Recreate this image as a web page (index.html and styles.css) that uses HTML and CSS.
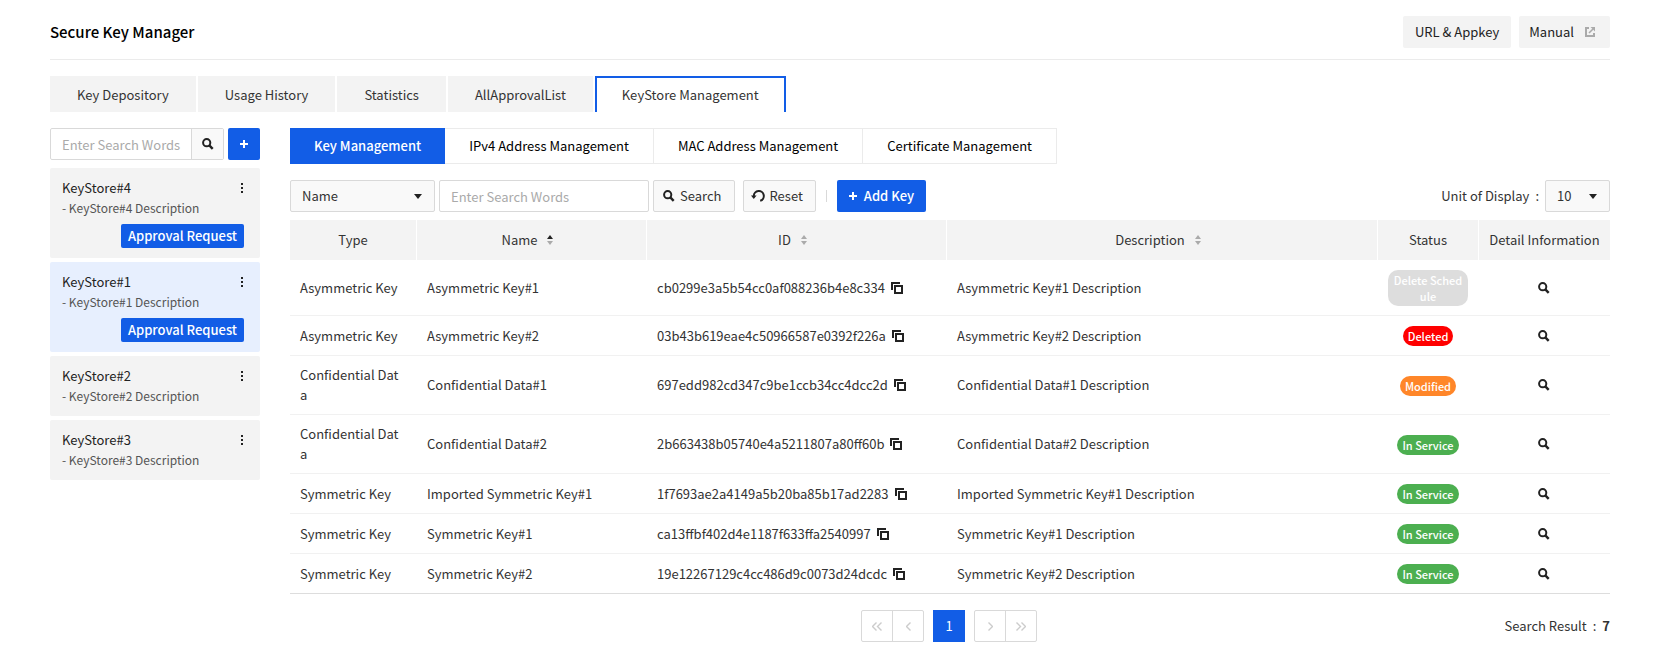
FILE: index.html
```html
<!DOCTYPE html>
<html lang="en">
<head>
<meta charset="utf-8">
<title>Secure Key Manager</title>
<link rel="stylesheet" href="styles.css">
</head>
<body>
<svg class="sprite" aria-hidden="true">
  <symbol id="i-search" viewBox="0 0 12 12"><circle cx="4.7" cy="4.7" r="3.6" fill="none" stroke="currentColor" stroke-width="2"/><path d="M7.3 7.3 10.7 10.8" stroke="currentColor" stroke-width="2.4"/></symbol>
  <symbol id="i-plus" viewBox="0 0 8 8"><path d="M4 0v8M0 4h8" stroke="currentColor" stroke-width="2"/></symbol>
  <symbol id="i-more" viewBox="0 0 2 10"><path d="M0 0h2v2H0zM0 4h2v2H0zM0 8h2v2H0z" fill="currentColor"/></symbol>
  <symbol id="i-copy" viewBox="0 0 12 12"><path d="M1 8V1h8" fill="none" stroke="currentColor" stroke-width="2"/><path d="M4 4h7v7H4z" fill="none" stroke="currentColor" stroke-width="2"/></symbol>
  <symbol id="i-reset" viewBox="0 0 14 12"><path d="M2.8 7.2V6a5 5 0 1 1 6.4 4.8" fill="none" stroke="currentColor" stroke-width="2"/><path d="M0 5.6h5.6L2.8 9z" fill="currentColor"/></symbol>
  <symbol id="i-caret" viewBox="0 0 8 5"><path d="M0 0h8L4 5z" fill="currentColor"/></symbol>
  <symbol id="i-external" viewBox="0 0 10 10"><path d="M4 1H1v8h8V6" fill="none" stroke="currentColor" stroke-width="2"/><path d="M5.5 0H10v4.5z" fill="currentColor"/><path d="M4 6 8 2" stroke="currentColor" stroke-width="1.6"/></symbol>
  <symbol id="i-left" viewBox="0 0 5 9"><path d="M4.5.5l-4 4 4 4" fill="none" stroke="currentColor" stroke-width="1.4"/></symbol>
  <symbol id="i-right" viewBox="0 0 5 9"><path d="M.5.5l4 4-4 4" fill="none" stroke="currentColor" stroke-width="1.4"/></symbol>
  <symbol id="i-first" viewBox="0 0 10 9"><path d="M4.5.5l-4 4 4 4M9.5.5l-4 4 4 4" fill="none" stroke="currentColor" stroke-width="1.4"/></symbol>
  <symbol id="i-last" viewBox="0 0 10 9"><path d="M.5.5l4 4-4 4M5.5.5l4 4-4 4" fill="none" stroke="currentColor" stroke-width="1.4"/></symbol>
</svg>

<header class="page-header">
  <h1>Secure Key Manager</h1>
  <div class="header-actions">
    <button class="soft-btn" type="button">URL &amp; Appkey</button>
    <a class="soft-btn manual" href="#">Manual <svg class="ic-external"><use href="#i-external"/></svg></a>
  </div>
</header>

<nav class="tabs">
  <button type="button">Key Depository</button>
  <button type="button">Usage History</button>
  <button type="button">Statistics</button>
  <button type="button">AllApprovalList</button>
  <button type="button" class="active">KeyStore Management</button>
</nav>

<div class="layout">
  <aside class="sidebar">
    <div class="side-search">
      <div class="search-group">
        <input type="text" placeholder="Enter Search Words" aria-label="Search key stores">
        <button type="button" aria-label="Search"><svg class="ic-search"><use href="#i-search"/></svg></button>
      </div>
      <button type="button" class="primary square" aria-label="Add key store"><svg class="ic-plus"><use href="#i-plus"/></svg></button>
    </div>
    <ul class="stores">
      <li>
        <div class="store-head"><span>KeyStore#4</span><button type="button" class="more" aria-label="More"><svg><use href="#i-more"/></svg></button></div>
        <p>- KeyStore#4 Description</p>
        <button type="button" class="primary approval">Approval Request</button>
      </li>
      <li class="selected">
        <div class="store-head"><span>KeyStore#1</span><button type="button" class="more" aria-label="More"><svg><use href="#i-more"/></svg></button></div>
        <p>- KeyStore#1 Description</p>
        <button type="button" class="primary approval">Approval Request</button>
      </li>
      <li>
        <div class="store-head"><span>KeyStore#2</span><button type="button" class="more" aria-label="More"><svg><use href="#i-more"/></svg></button></div>
        <p>- KeyStore#2 Description</p>
      </li>
      <li>
        <div class="store-head"><span>KeyStore#3</span><button type="button" class="more" aria-label="More"><svg><use href="#i-more"/></svg></button></div>
        <p>- KeyStore#3 Description</p>
      </li>
    </ul>
  </aside>

  <main class="content">
    <nav class="subtabs">
      <button type="button" class="active">Key Management</button>
      <button type="button">IPv4 Address Management</button>
      <button type="button">MAC Address Management</button>
      <button type="button">Certificate Management</button>
    </nav>

    <div class="toolbar">
      <div class="filter">
        <div class="select field"><select aria-label="Search field"><option>Name</option></select><svg><use href="#i-caret"/></svg></div>
        <input class="keyword" type="text" placeholder="Enter Search Words" aria-label="Search keys">
        <button type="button" class="line-btn"><svg class="ic-search"><use href="#i-search"/></svg>Search</button>
      </div>
      <button type="button" class="line-btn reset"><svg class="ic-reset"><use href="#i-reset"/></svg>Reset</button>
      <span class="divider"></span>
      <button type="button" class="primary add"><svg class="ic-plus"><use href="#i-plus"/></svg>Add Key</button>
      <div class="unit">
        <label for="unit">Unit of Display</label><span class="colon">:</span>
        <div class="select count"><select id="unit"><option>10</option></select><svg><use href="#i-caret"/></svg></div>
      </div>
    </div>

    <table class="keys">
      <colgroup><col class="c-type"><col class="c-name"><col class="c-id"><col><col class="c-status"><col class="c-detail"></colgroup>
      <thead>
        <tr>
          <th>Type</th>
          <th class="sortable">Name<svg class="sort asc" viewBox="0 0 6 10"><path d="M3 0l3 4H0z"/><path d="M3 10l3-4H0z"/></svg></th>
          <th class="sortable">ID<svg class="sort" viewBox="0 0 6 10"><path d="M3 0l3 4H0z"/><path d="M3 10l3-4H0z"/></svg></th>
          <th class="sortable">Description<svg class="sort" viewBox="0 0 6 10"><path d="M3 0l3 4H0z"/><path d="M3 10l3-4H0z"/></svg></th>
          <th>Status</th>
          <th>Detail Information</th>
        </tr>
      </thead>
      <tbody>
        <tr><td>Asymmetric Key</td><td>Asymmetric Key#1</td><td>cb0299e3a5b54cc0af088236b4e8c334<button type="button" class="copy" aria-label="Copy ID"><svg><use href="#i-copy"/></svg></button></td><td>Asymmetric Key#1 Description</td><td><span class="badge scheduled">Delete Schedule</span></td><td class="detail"><button type="button" aria-label="Details"><svg class="ic-search"><use href="#i-search"/></svg></button></td></tr>
        <tr><td>Asymmetric Key</td><td>Asymmetric Key#2</td><td>03b43b619eae4c50966587e0392f226a<button type="button" class="copy" aria-label="Copy ID"><svg><use href="#i-copy"/></svg></button></td><td>Asymmetric Key#2 Description</td><td><span class="badge deleted">Deleted</span></td><td class="detail"><button type="button" aria-label="Details"><svg class="ic-search"><use href="#i-search"/></svg></button></td></tr>
        <tr><td>Confidential Data</td><td>Confidential Data#1</td><td>697edd982cd347c9be1ccb34cc4dcc2d<button type="button" class="copy" aria-label="Copy ID"><svg><use href="#i-copy"/></svg></button></td><td>Confidential Data#1 Description</td><td><span class="badge modified">Modified</span></td><td class="detail"><button type="button" aria-label="Details"><svg class="ic-search"><use href="#i-search"/></svg></button></td></tr>
        <tr><td>Confidential Data</td><td>Confidential Data#2</td><td>2b663438b05740e4a5211807a80ff60b<button type="button" class="copy" aria-label="Copy ID"><svg><use href="#i-copy"/></svg></button></td><td>Confidential Data#2 Description</td><td><span class="badge service">In Service</span></td><td class="detail"><button type="button" aria-label="Details"><svg class="ic-search"><use href="#i-search"/></svg></button></td></tr>
        <tr><td>Symmetric Key</td><td>Imported Symmetric Key#1</td><td>1f7693ae2a4149a5b20ba85b17ad2283<button type="button" class="copy" aria-label="Copy ID"><svg><use href="#i-copy"/></svg></button></td><td>Imported Symmetric Key#1 Description</td><td><span class="badge service">In Service</span></td><td class="detail"><button type="button" aria-label="Details"><svg class="ic-search"><use href="#i-search"/></svg></button></td></tr>
        <tr><td>Symmetric Key</td><td>Symmetric Key#1</td><td>ca13ffbf402d4e1187f633ffa2540997<button type="button" class="copy" aria-label="Copy ID"><svg><use href="#i-copy"/></svg></button></td><td>Symmetric Key#1 Description</td><td><span class="badge service">In Service</span></td><td class="detail"><button type="button" aria-label="Details"><svg class="ic-search"><use href="#i-search"/></svg></button></td></tr>
        <tr><td>Symmetric Key</td><td>Symmetric Key#2</td><td>19e12267129c4cc486d9c0073d24dcdc<button type="button" class="copy" aria-label="Copy ID"><svg><use href="#i-copy"/></svg></button></td><td>Symmetric Key#2 Description</td><td><span class="badge service">In Service</span></td><td class="detail"><button type="button" aria-label="Details"><svg class="ic-search"><use href="#i-search"/></svg></button></td></tr>
      </tbody>
    </table>

    <footer class="table-footer">
      <nav class="pager" aria-label="Pages">
        <div class="pager-group">
          <button type="button" aria-label="First page"><svg class="double"><use href="#i-first"/></svg></button>
          <button type="button" aria-label="Previous page"><svg><use href="#i-left"/></svg></button>
        </div>
        <button type="button" class="primary square current">1</button>
        <div class="pager-group">
          <button type="button" aria-label="Next page"><svg><use href="#i-right"/></svg></button>
          <button type="button" aria-label="Last page"><svg class="double"><use href="#i-last"/></svg></button>
        </div>
      </nav>
      <p class="result">Search Result<span class="colon">:</span><strong>7</strong></p>
    </footer>
  </main>
</div>
</body>
</html>
```
FILE: styles.css
```css
* { box-sizing: border-box; }

body {
  margin: 0;
  padding: 16px 50px;
  background: #fff;
  color: #333;
  font: 13px/20px "Noto Sans CJK KR", "Noto Sans", sans-serif;
}

button, input, select {
  margin: 0;
  padding: 0;
  border: 0;
  border-radius: 0;
  background: none;
  color: inherit;
  font: inherit;
}

button { cursor: pointer; }
svg { display: block; flex: none; }
p, h1, ul { margin: 0; padding: 0; }
ul { list-style: none; }

.sprite { display: none; }
.ic-search { width: 12px; height: 12px; color: #222; }
.ic-plus { width: 8px; height: 8px; }
.ic-reset { width: 14px; height: 12px; color: #222; }
.ic-external { width: 10px; height: 10px; color: #aaa; }

.page-header {
  display: flex;
  justify-content: space-between;
  align-items: center;
  padding-bottom: 11px;
  border-bottom: 1px solid #ebebeb;
}
.page-header h1 { font-size: 15px; font-weight: 500; color: #000; }
.header-actions { display: flex; gap: 8px; }
.soft-btn {
  display: flex;
  align-items: center;
  height: 32px;
  padding: 0 12px;
  border-radius: 2px;
  background: #f3f3f3;
  color: #222;
  text-decoration: none;
}
.manual { gap: 11px; padding: 0 15px 0 10px; }

.tabs { display: flex; gap: 2px; margin-top: 16px; }
.tabs button { height: 36px; padding: 2px 27px 0; background: #f3f3f3; }
.tabs .active {
  padding: 0 25px;
  border: 2px solid #125de6;
  border-bottom: 0;
  background: #fff;
}

.layout {
  display: grid;
  grid-template-columns: 210px minmax(0, 1fr);
  gap: 30px;
  margin-top: 16px;
}

.primary {
  border-radius: 2px;
  background: #125de6;
  color: #fff;
  font-weight: 500;
}
.square { display: grid; place-items: center; width: 32px; height: 32px; }

.side-search { display: flex; gap: 4px; }
.search-group {
  display: flex;
  flex: 1;
  min-width: 0;
  height: 32px;
  border: 1px solid #d9d9d9;
  border-radius: 2px;
}
.search-group input { flex: 1; min-width: 0; padding: 2px 0 0 11px; }
.search-group button {
  display: grid;
  place-items: center;
  width: 32px;
  border-left: 1px solid #d9d9d9;
  background: #f9f9f9;
}
input::placeholder { color: #aaa; opacity: 1; }

.stores { display: grid; gap: 4px; margin-top: 8px; }
.stores li {
  padding: 10px 16px 10px 12px;
  border-radius: 2px;
  background: #f3f3f3;
}
.stores .selected { background: #e7effe; }
.store-head { display: flex; justify-content: space-between; color: #222; }
.stores p { font-size: 12px; color: #555; }
.more { display: grid; place-items: center; width: 4px; height: 20px; }
.more svg { width: 2px; height: 10px; }
.approval { display: block; height: 24px; margin: 6px 0 0 auto; padding: 0 7px; }

.subtabs { display: flex; }
.subtabs button {
  height: 36px;
  padding: 0 24px;
  border: 1px solid #ebebeb;
  border-left: 0;
  color: #000;
}
.subtabs .active {
  border: 0;
  background: #125de6;
  color: #fff;
  font-weight: 500;
}

.toolbar { display: flex; align-items: center; margin-top: 16px; }
.filter { display: flex; gap: 4px; }
.select { position: relative; }
.select select {
  width: 100%;
  height: 32px;
  padding: 0 11px;
  border: 1px solid #d9d9d9;
  border-radius: 2px;
  background: #f9f9f9;
  appearance: none;
}
.select svg {
  position: absolute;
  top: 14px;
  right: 13px;
  width: 8px;
  height: 5px;
  color: #222;
  pointer-events: none;
}
.field { width: 145px; }
.count { width: 65px; }
.keyword {
  width: 210px;
  height: 32px;
  padding: 0 11px;
  border: 1px solid #d9d9d9;
  border-radius: 2px;
}
.line-btn {
  display: flex;
  align-items: center;
  gap: 5px;
  height: 32px;
  padding: 0 13px 0 9px;
  border: 1px solid #d9d9d9;
  border-radius: 2px;
  background: #f9f9f9;
}
.reset { gap: 4px; margin-left: 8px; padding: 0 12px 0 7px; }
.divider { width: 1px; height: 12px; margin: 0 10px; background: #d9d9d9; }
.add { display: flex; align-items: center; gap: 7px; height: 32px; padding: 0 12px; }
.unit { display: flex; align-items: center; margin-left: auto; }
.colon { margin: 0 6px; }

.keys {
  width: 100%;
  margin-top: 8px;
  border-collapse: separate;
  border-spacing: 0;
  border-bottom: 1px solid #ddd;
  table-layout: fixed;
}
.c-type { width: 127px; }
.c-name { width: 230px; }
.c-id { width: 300px; }
.c-status { width: 101px; }
.c-detail { width: 131px; }
.keys th {
  height: 40px;
  padding: 0;
  border-right: 1px solid #fff;
  background: #f3f3f3;
  font-weight: 400;
}
.keys th:last-child { border-right: 0; }
.keys .sortable { padding-right: 8px; }
.sort {
  display: inline-block;
  width: 6px;
  height: 10px;
  margin-left: 10px;
  fill: #aaa;
}
.sort.asc path:first-child { fill: #222; }
.keys td {
  padding: 9px 12px 9px 10px;
  border-bottom: 1px solid #f1f1f1;
  word-break: break-all;
}
.keys td:nth-child(5) { padding: 10px 11px 9px 10px; }
.keys tr:last-child td { height: 39px; border-bottom: 0; }
.copy { margin-left: 6px; vertical-align: -1px; }
.copy svg { width: 12px; height: 12px; color: #222; }
.detail button { display: block; margin: 0 auto; }
.badge {
  display: block;
  width: fit-content;
  margin: 0 auto;
  padding: 2px 5px;
  border-radius: 10px;
  color: #fff;
  font-size: 11px;
  font-weight: 500;
  line-height: 16px;
  text-align: center;
}
.scheduled { background: #ddd; }
.deleted { background: #f00; }
.modified { background: #ff8629; }
.service { background: #4caf50; }

.table-footer {
  display: grid;
  grid-template-columns: 1fr auto 1fr;
  align-items: center;
  margin-top: 16px;
}
.pager { display: flex; grid-column: 2; gap: 9px; padding-right: 2px; }
.pager-group { display: flex; border: 1px solid #d9d9d9; border-radius: 2px; }
.pager-group button { display: grid; place-items: center; width: 30px; height: 30px; }
.pager-group button + button { width: 31px; border-left: 1px solid #d9d9d9; }
.pager-group svg { width: 5px; height: 9px; color: #ccc; }
.pager-group .double { width: 10px; }
.current { border-radius: 0; font-weight: 400; }
.result { justify-self: end; }
.result strong { font-weight: 700; }
```
